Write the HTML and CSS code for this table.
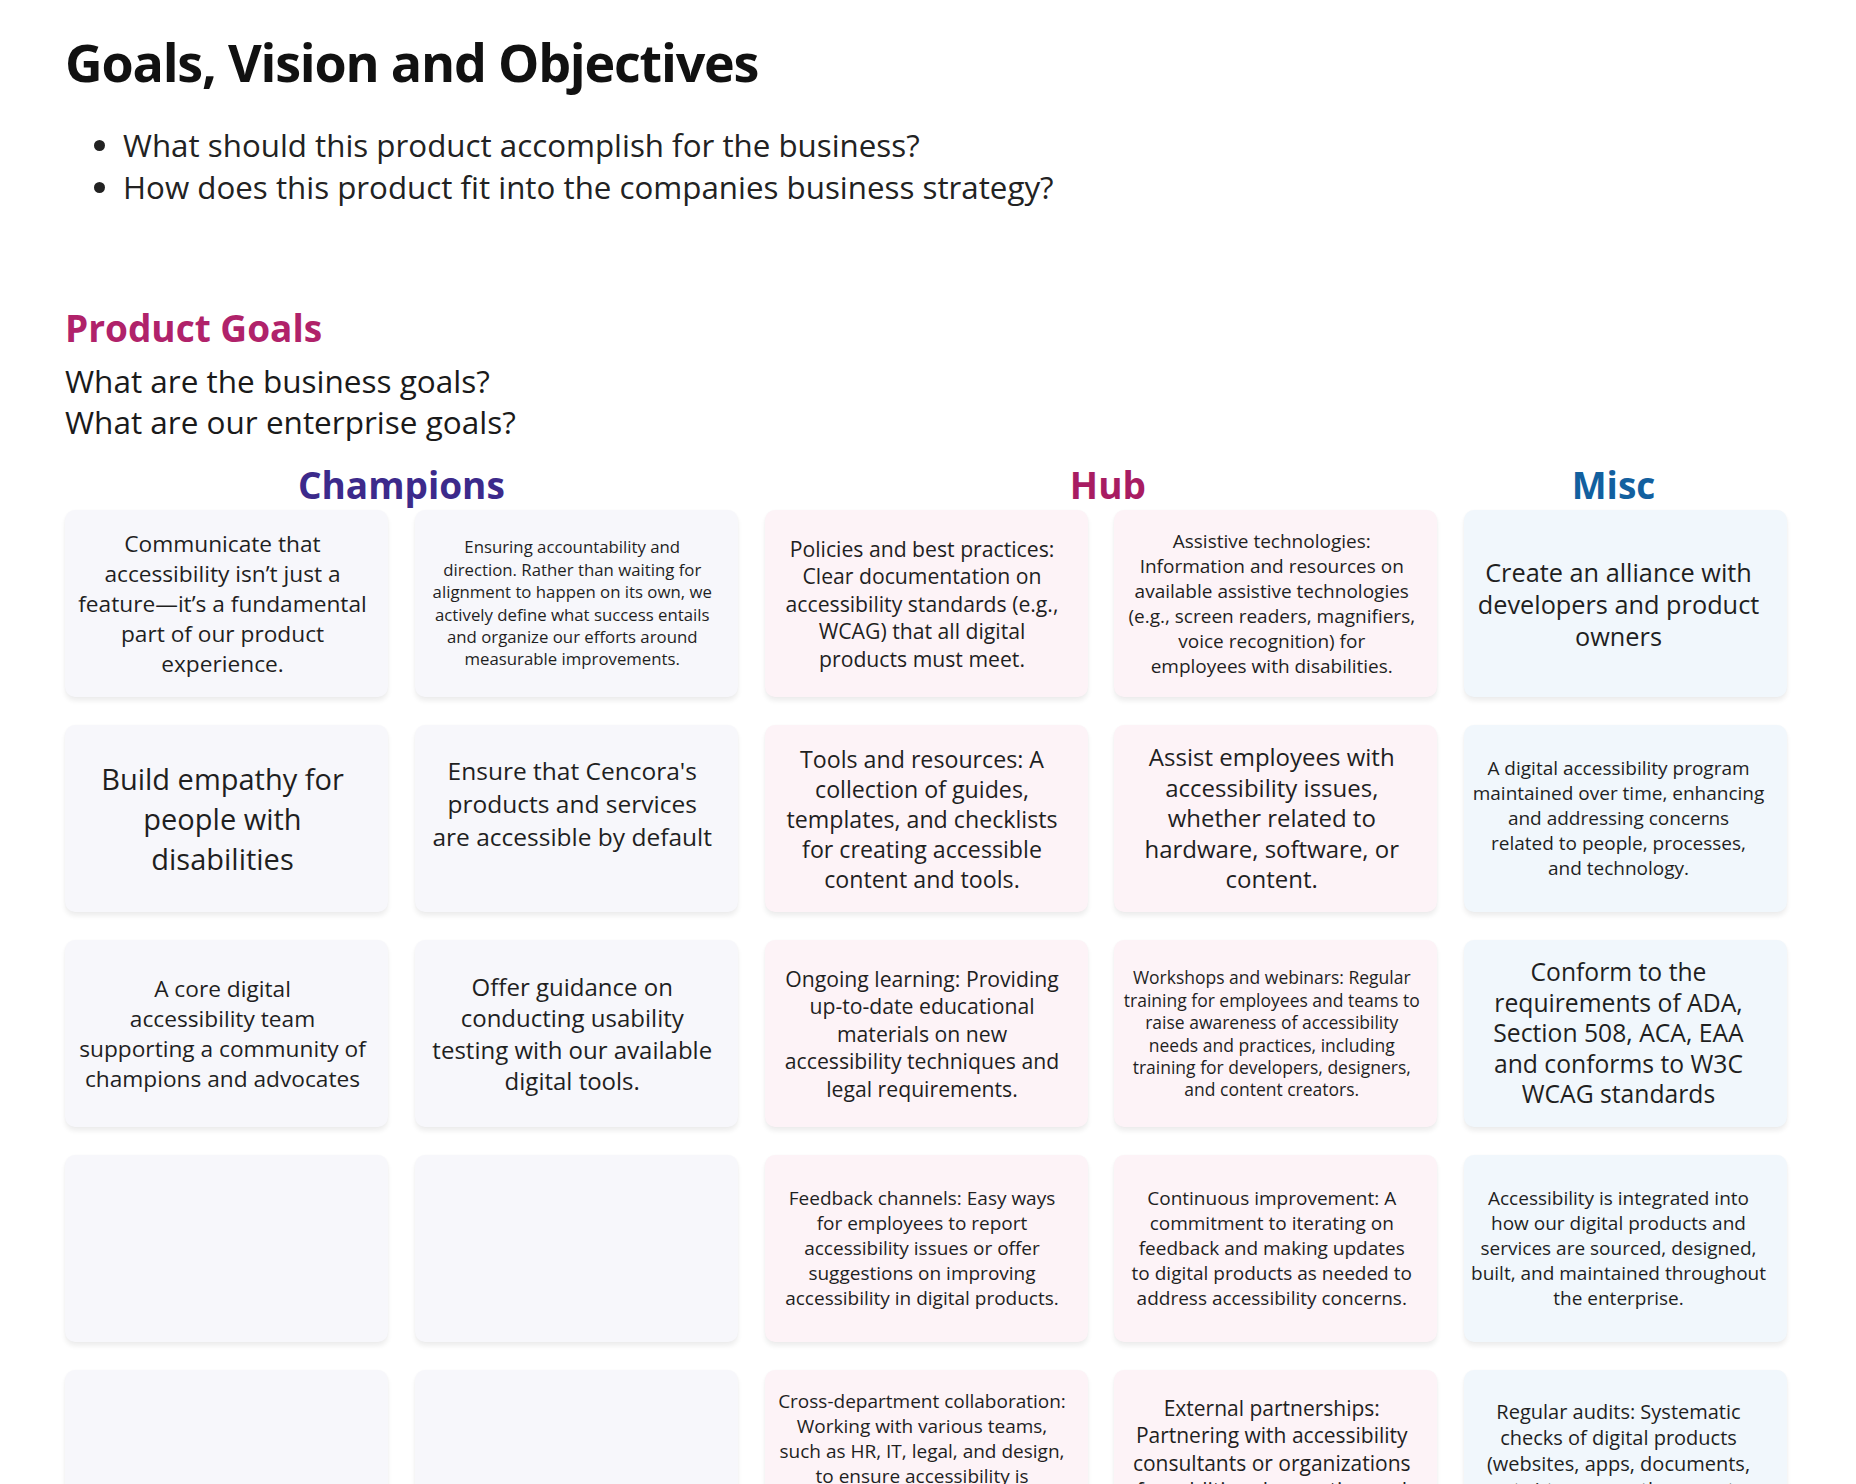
FILE: index.html
```html
<!DOCTYPE html>
<html lang="en">
<head>
<meta charset="utf-8">
<title>Goals, Vision and Objectives</title>
<link rel="stylesheet" href="styles.css">
</head>
<body>
<main class="page">
  <h1 class="title">Goals, Vision and Objectives</h1>
  <ul class="bullets">
    <li>What should this product accomplish for the business?</li>
    <li>How does this product fit into the companies business strategy?</li>
  </ul>

  <h2 class="section-title">Product Goals</h2>
  <p class="questions">What are the business goals?<br>What are our enterprise goals?</p>

  <div class="col-heads">
    <h3 class="col-head champions">Champions</h3>
    <h3 class="col-head hub">Hub</h3>
    <h3 class="col-head misc">Misc</h3>
  </div>

  <div class="board">
    <!-- Row 1 -->
    <div class="card c-champ"><p class="s227">Communicate that<br>accessibility isn’t just a<br>feature—it’s a fundamental<br>part of our product<br>experience.</p></div>
    <div class="card c-champ"><p class="s168">Ensuring accountability and<br>direction. Rather than waiting for<br>alignment to happen on its own, we<br>actively define what success entails<br>and organize our efforts around<br>measurable improvements.</p></div>
    <div class="card c-hub"><p class="s212">Policies and best practices:<br>Clear documentation on<br>accessibility standards (e.g.,<br>WCAG) that all digital<br>products must meet.</p></div>
    <div class="card c-hub"><p class="s19">Assistive technologies:<br>Information and resources on<br>available assistive technologies<br>(e.g., screen readers, magnifiers,<br>voice recognition) for<br>employees with disabilities.</p></div>
    <div class="card c-misc"><p class="s253">Create an alliance with<br>developers and product<br>owners</p></div>

    <!-- Row 2 -->
    <div class="card c-champ"><p class="s29">Build empathy for<br>people with<br>disabilities</p></div>
    <div class="card c-champ raised"><p class="s245">Ensure that Cencora's<br>products and services<br>are accessible by default</p></div>
    <div class="card c-hub"><p class="s232">Tools and resources: A<br>collection of guides,<br>templates, and checklists<br>for creating accessible<br>content and tools.</p></div>
    <div class="card c-hub"><p class="s24">Assist employees with<br>accessibility issues,<br>whether related to<br>hardware, software, or<br>content.</p></div>
    <div class="card c-misc"><p class="s19">A digital accessibility program<br>maintained over time, enhancing<br>and addressing concerns<br>related to people, processes,<br>and technology.</p></div>

    <!-- Row 3 -->
    <div class="card c-champ"><p class="s227">A core digital<br>accessibility team<br>supporting a community of<br>champions and advocates</p></div>
    <div class="card c-champ"><p class="s24b">Offer guidance on<br>conducting usability<br>testing with our available<br>digital tools.</p></div>
    <div class="card c-hub"><p class="s212">Ongoing learning: Providing<br>up-to-date educational<br>materials on new<br>accessibility techniques and<br>legal requirements.</p></div>
    <div class="card c-hub"><p class="s175">Workshops and webinars: Regular<br>training for employees and teams to<br>raise awareness of accessibility<br>needs and practices, including<br>training for developers, designers,<br>and content creators.</p></div>
    <div class="card c-misc"><p class="s247">Conform to the<br>requirements of ADA,<br>Section 508, ACA, EAA<br>and conforms to W3C<br>WCAG standards</p></div>

    <!-- Row 4 -->
    <div class="card c-champ"></div>
    <div class="card c-champ"></div>
    <div class="card c-hub"><p class="s19">Feedback channels: Easy ways<br>for employees to report<br>accessibility issues or offer<br>suggestions on improving<br>accessibility in digital products.</p></div>
    <div class="card c-hub"><p class="s19">Continuous improvement: A<br>commitment to iterating on<br>feedback and making updates<br>to digital products as needed to<br>address accessibility concerns.</p></div>
    <div class="card c-misc"><p class="s19">Accessibility is integrated into<br>how our digital products and<br>services are sourced, designed,<br>built, and maintained throughout<br>the enterprise.</p></div>

    <!-- Row 5 -->
    <div class="card c-champ"></div>
    <div class="card c-champ"></div>
    <div class="card c-hub"><p class="s19">Cross-department collaboration:<br>Working with various teams,<br>such as HR, IT, legal, and design,<br>to ensure accessibility is<br>integrated into all areas<br>of the organization.</p></div>
    <div class="card c-hub"><p class="s21">External partnerships:<br>Partnering with accessibility<br>consultants or organizations<br>for additional expertise and<br>support.</p></div>
    <div class="card c-misc"><p class="s20">Regular audits: Systematic<br>checks of digital products<br>(websites, apps, documents,<br>etc.) to ensure they meet<br>accessibility standards.</p></div>
  </div>
</main>
</body>
</html>
```
FILE: styles.css
```css
html, body {
  margin: 0;
  padding: 0;
  background: #ffffff;
}

body {
  font-family: "Open Sans", "Lato", sans-serif;
  color: #1e1e1e;
}

.page {
  padding: 31px 0 60px 65px;
  width: 1728px;
}

.title {
  margin: 0;
  font-size: 52px;
  line-height: 62px;
  font-weight: 700;
  letter-spacing: -1.2px;
  color: #111111;
}

.bullets {
  margin: 31px 0 0 0;
  padding-left: 58px;
  font-size: 31.3px;
  line-height: 42px;
  color: #222222;
}

.section-title {
  margin: 99px 0 0 0;
  font-size: 37px;
  line-height: 42px;
  font-weight: 700;
  color: #b0226a;
}

.questions {
  margin: 11px 0 0 0;
  font-size: 31.5px;
  line-height: 41px;
  color: #1a1a1a;
}

.col-heads,
.board {
  display: grid;
  grid-template-columns: repeat(5, 323px);
  column-gap: 26.75px;
}

.col-heads {
  margin-top: 21px;
}

.col-head {
  margin: 0;
  font-size: 37px;
  line-height: 44px;
  font-weight: 700;
  text-align: center;
}

.col-head.champions {
  grid-column: 1 / span 2;
  color: #3c2a8b;
}

.col-head.hub {
  grid-column: 3 / span 2;
  padding-left: 14px;
  color: #a81c62;
}

.col-head.misc {
  grid-column: 5 / span 1;
  padding-right: 24px;
  color: #12609f;
}

.board {
  margin-top: 3px;
  grid-auto-rows: 187px;
  row-gap: 28px;
}

.card {
  border-radius: 10px;
  display: flex;
  align-items: center;
  justify-content: center;
  padding: 0 8px 0 0;
  text-align: center;
  box-shadow: 0 4px 5px rgba(0, 0, 0, 0.07), 0 0 2px rgba(0, 0, 0, 0.03);
}

.card p {
  margin: 0;
  white-space: nowrap;
  color: #1f1f1f;
}

.c-champ { background: #f7f7fb; }
.c-hub { background: #fdf3f7; }
.c-misc {
  background: #f1f7fc;
  padding: 0 14px 0 0;
}

.raised { padding-bottom: 30px; }

.s168 { font-size: 16.8px; line-height: 22.4px; }
.s175 { font-size: 17.5px; line-height: 22.4px; }
.s19  { font-size: 19px;   line-height: 25px; }
.s20  { font-size: 20px;   line-height: 26px; }
.s21  { font-size: 21px;   line-height: 27.5px; }
.s212 { font-size: 21.2px; line-height: 27.5px; }
.s227 { font-size: 22.7px; line-height: 30px; }
.s232 { font-size: 23.2px; line-height: 30px; }
.s24  { font-size: 24px;   line-height: 30.4px; }
.s24b { font-size: 24px;   line-height: 31.5px; }
.s245 { font-size: 24.5px; line-height: 33px; }
.s247 { font-size: 24.7px; line-height: 30.5px; }
.s253 { font-size: 25.3px; line-height: 32px; }
.s29  { font-size: 29px;   line-height: 40px; }
```
